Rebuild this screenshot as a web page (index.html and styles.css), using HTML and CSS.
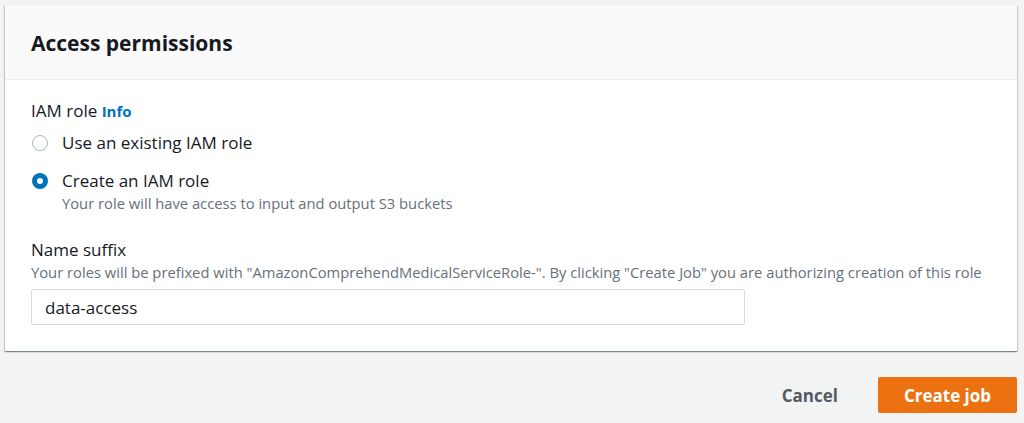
FILE: index.html
```html
<!DOCTYPE html>
<html lang="en">
<head>
    <meta charset="UTF-8">
    <title>Access permissions</title>
    <link rel="stylesheet" href="styles.css">
</head>
<body>
    <div class="container">
        <div class="container-header">
            <h2>Access permissions</h2>
        </div>
        <div class="container-body">
            <div class="field">
                <div class="field-label">IAM role <a class="info" href="#">Info</a></div>
                <label class="radio-row">
                    <input type="radio" name="role" value="existing">
                    <span class="radio-text">Use an existing IAM role</span>
                </label>
                <label class="radio-row radio-second">
                    <input type="radio" name="role" value="create" checked>
                    <span class="radio-text">Create an IAM role</span>
                </label>
                <div class="radio-desc">Your role will have access to input and output S3 buckets</div>
            </div>

            <div class="field field-suffix">
                <label class="field-label" for="suffix">Name suffix</label>
                <div class="field-desc">Your roles will be prefixed with "AmazonComprehendMedicalServiceRole-". By clicking "Create Job" you are authorizing creation of this role</div>
                <input type="text" id="suffix" class="text-input" value="data-access">
            </div>
        </div>
    </div>

    <div class="actions">
        <button class="btn-link">Cancel</button>
        <button class="btn-primary">Create job</button>
    </div>
</body>
</html>
```

FILE: styles.css
```css
body {
    background-color: #f2f3f3;
    color: #16191f;
    font-family: 'Open Sans', 'Noto Sans', sans-serif;
    font-size: 17px;
    margin: 0;
    padding: 5px 7px 0 5px;
}
.container {
    background-color: #fff;
    box-shadow: 0 1px 1px 0 rgba(0, 28, 36, 0.3), 1px 1px 1px 0 rgba(0, 28, 36, 0.15), -1px 1px 1px 0 rgba(0, 28, 36, 0.15);
}
.container-header {
    background-color: #fafafa;
    border-bottom: 1px solid #eaeded;
    padding: 24px 26px 22px;
}
.container-header h2 {
    margin: 0;
    font-size: 21px;
    line-height: 28px;
    font-weight: 700;
}
.container-body {
    padding: 20px 26px 26px;
}
.field-label {
    display: block;
    line-height: 22px;
}
.info {
    color: #0073bb;
    font-size: 15px;
    font-weight: 700;
    text-decoration: none;
}
.radio-row {
    display: flex;
    align-items: center;
    margin-top: 10px;
    line-height: 22px;
}
.radio-second {
    margin-top: 16px;
}
.radio-row input {
    appearance: none;
    width: 16px;
    height: 16px;
    margin: -1px 14px 0 1px;
    border: 1px solid #aab7b8;
    border-radius: 50%;
    background-color: #fff;
    box-sizing: border-box;
}
.radio-row input:checked {
    border: 5px solid #0073bb;
}
.radio-desc {
    margin-left: 31px;
    font-size: 14.75px;
    line-height: 22px;
    color: #687078;
}
.field-suffix {
    margin-top: 25px;
}
.field-desc {
    font-size: 14.75px;
    line-height: 22px;
    color: #687078;
}
.text-input {
    display: block;
    margin-top: 6px;
    width: 714px;
    height: 36px;
    box-sizing: border-box;
    padding: 0 13px;
    border: 1px solid #d5dbdb;
    border-radius: 2px;
    font-family: inherit;
    font-size: 17px;
    color: #16191f;
}
.actions {
    display: flex;
    justify-content: flex-end;
    align-items: center;
    margin-top: 26px;
}
.btn-link {
    background: none;
    border: none;
    padding: 0 20px;
    margin-right: 20px;
    font-family: inherit;
    font-size: 17px;
    font-weight: 700;
    color: #545b64;
    cursor: pointer;
}
.btn-primary {
    background-color: #ec7211;
    color: #fff;
    border: none;
    border-radius: 2px;
    height: 36px;
    width: 139px;
    font-family: inherit;
    font-size: 17px;
    font-weight: 700;
    cursor: pointer;
}
```
